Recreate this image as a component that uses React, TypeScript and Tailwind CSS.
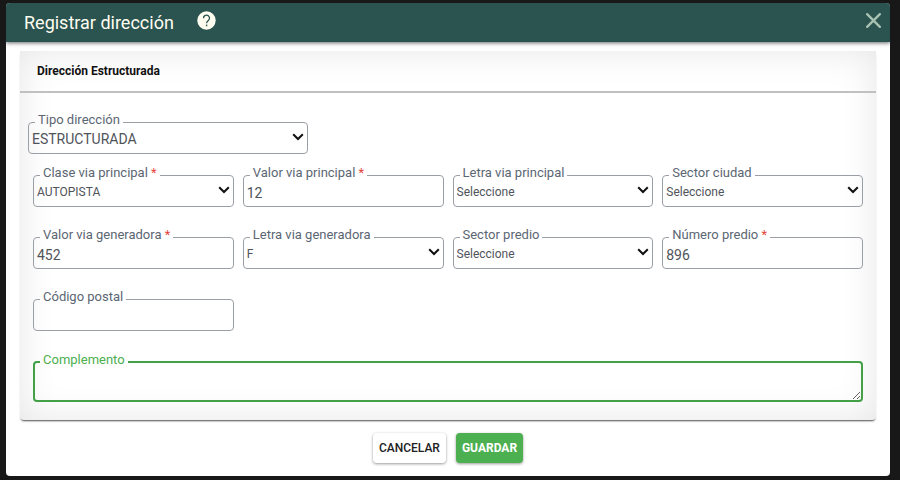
import React, { useState } from 'react';

type FieldProps = {
  id: string;
  label: string;
  required?: boolean;
  className?: string;
  children: React.ReactNode;
};

function Field({ id, label, required, className = '', children }: FieldProps) {
  return (
    <fieldset className={`h-10 min-w-0 rounded-[4px] border border-[#9a9ea6] pl-[6px] ${className}`}>
      <legend className="h-4 px-[3px] text-[13px] leading-3 text-[#5b6673]">
        <label htmlFor={id}>
          {label}
          {required && <span className="text-[#e5483d]"> *</span>}
        </label>
      </legend>
      {children}
    </fieldset>
  );
}

type SelectProps = { id: string; options: string[]; large?: boolean };

function Select({ id, options, large }: SelectProps) {
  return (
    <div className="relative -ml-[3px]">
      <select
        id={id}
        className={`block h-[18px] w-full appearance-none bg-transparent text-[#50545a] outline-none ${
          large ? 'text-[14px] leading-[18px]' : 'text-[12px] leading-[18px]'
        }`}
      >
        {options.map((option) => (
          <option key={option}>{option}</option>
        ))}
      </select>
      <svg
        className="pointer-events-none absolute top-[3px] right-[3px] h-2 w-3"
        viewBox="0 0 12 8"
        fill="none"
        stroke="#111"
        strokeWidth="2"
        aria-hidden="true"
      >
        <path d="M1.2 1.2 6 6l4.800-4.800" />
      </svg>
    </div>
  );
}

function TextInput({ id, initial = '' }: { id: string; initial?: string }) {
  const [value, setValue] = useState(initial);
  return (
    <input
      id={id}
      type="text"
      value={value}
      onChange={(e) => setValue(e.target.value)}
      className="-ml-[3px] block h-5 w-full bg-transparent text-[14px] leading-5 text-[#50545a] outline-none"
    />
  );
}

export default function App() {
  return (
    <div className="min-h-screen bg-[#181818] pt-[3px] pr-[10px] pb-[5px] pl-[6px] font-['Roboto','Liberation_Sans',sans-serif]">
      <div className="overflow-hidden rounded-[4px] bg-white" role="dialog" aria-labelledby="title">
        <header className="relative flex h-[39px] items-center bg-[#2b5450] pr-2 pl-[18px] shadow-[0_1px_4px_rgba(0,0,0,0.6)]">
          <h1 id="title" className="text-[18px] leading-6 text-[#fffdf0]">
            Registrar dirección
          </h1>
          <button type="button" aria-label="Ayuda" className="-mt-1 ml-[23px]">
            <svg className="block h-[19px] w-[19px]" viewBox="0 0 19 19" aria-hidden="true">
              <circle cx="9.500" cy="9.500" r="9.200" fill="#fffdf0" />
              <path
                d="M6.500 7.200a3 3 0 1 1 4.900 2.200c-1.200 1-1.800 1.300-1.800 2.800"
                fill="none"
                stroke="#2b5450"
                strokeWidth="1.300"
              />
              <rect x="8.900" y="13.600" width="1.400" height="1.600" fill="#2b5450" />
            </svg>
          </button>
          <button type="button" aria-label="Cerrar" className="-mt-1 ml-auto">
            <svg className="block h-[17px] w-[17px]" viewBox="0 0 16 16" fill="none" stroke="#a9c2b2" strokeWidth="2.200" strokeLinecap="round" aria-hidden="true">
              <path d="M2 2l12 12M14 2 2 14" />
            </svg>
          </button>
        </header>

        <form className="px-[14px] pt-[9px] pb-[13px]" onSubmit={(e) => e.preventDefault()}>
          <section className="rounded-b-[4px] bg-white shadow-[inset_0_0_36px_rgba(0,0,0,0.1),0_2px_2px_-1px_rgba(0,0,0,0.7)]">
            <h2 className="h-[42px] border-b-2 border-[#c0c0c0] pl-[17px] text-[12px] leading-10 font-bold text-[#111]">
              Dirección Estructurada
            </h2>
            <div className="px-[13px] pt-[21px] pb-[18px]">
              <Field id="tipo" label="Tipo dirección" className="-ml-[5px] w-[280px]">
                <Select id="tipo" options={['ESTRUCTURADA', 'NO ESTRUCTURADA']} large />
              </Field>
              <div className="mt-[13px] grid grid-cols-4 gap-x-[9px] gap-y-[22px]">
                <Field id="clase" label="Clase via principal" required>
                  <Select id="clase" options={['AUTOPISTA', 'AVENIDA', 'CALLE', 'CARRERA']} />
                </Field>
                <Field id="valorPrincipal" label="Valor via principal" required>
                  <TextInput id="valorPrincipal" initial="12" />
                </Field>
                <Field id="letraPrincipal" label="Letra via principal">
                  <Select id="letraPrincipal" options={['Seleccione', 'A', 'B', 'C']} />
                </Field>
                <Field id="sectorCiudad" label="Sector ciudad">
                  <Select id="sectorCiudad" options={['Seleccione', 'NORTE', 'SUR']} />
                </Field>
                <Field id="valorGeneradora" label="Valor via generadora" required>
                  <TextInput id="valorGeneradora" initial="452" />
                </Field>
                <Field id="letraGeneradora" label="Letra via generadora">
                  <Select id="letraGeneradora" options={['F', 'G', 'H']} />
                </Field>
                <Field id="sectorPredio" label="Sector predio">
                  <Select id="sectorPredio" options={['Seleccione', 'NORTE', 'SUR']} />
                </Field>
                <Field id="numeroPredio" label="Número predio" required>
                  <TextInput id="numeroPredio" initial="896" />
                </Field>
                <Field id="postal" label="Código postal">
                  <TextInput id="postal" />
                </Field>
              </div>
              <fieldset className="mt-[23px] min-w-0 rounded-[4px] border-2 border-[#43a047] pl-[5px]">
                <legend className="h-4 px-[3px] text-[13px] leading-3 text-[#4caf50]">
                  <label htmlFor="complemento">Complemento</label>
                </legend>
                <textarea
                  id="complemento"
                  className="block h-[30px] w-full resize-y bg-transparent text-[14px] leading-5 text-[#50545a] outline-none"
                />
              </fieldset>
            </div>
          </section>

          <div className="mt-[13px] flex justify-center gap-[10px]">
            <button
              type="button"
              className="h-[30px] rounded-[4px] bg-white px-[6px] text-[12px] leading-4 font-medium text-[#222] shadow-[0_1px_3px_rgba(0,0,0,0.4)]"
            >
              CANCELAR
            </button>
            <button
              type="submit"
              className="h-[30px] rounded-[4px] bg-[#4caf50] px-[6px] text-[12px] leading-4 font-bold text-white shadow-[0_1px_3px_rgba(0,0,0,0.4)]"
            >
              GUARDAR
            </button>
          </div>
        </form>
      </div>
    </div>
  );
}
